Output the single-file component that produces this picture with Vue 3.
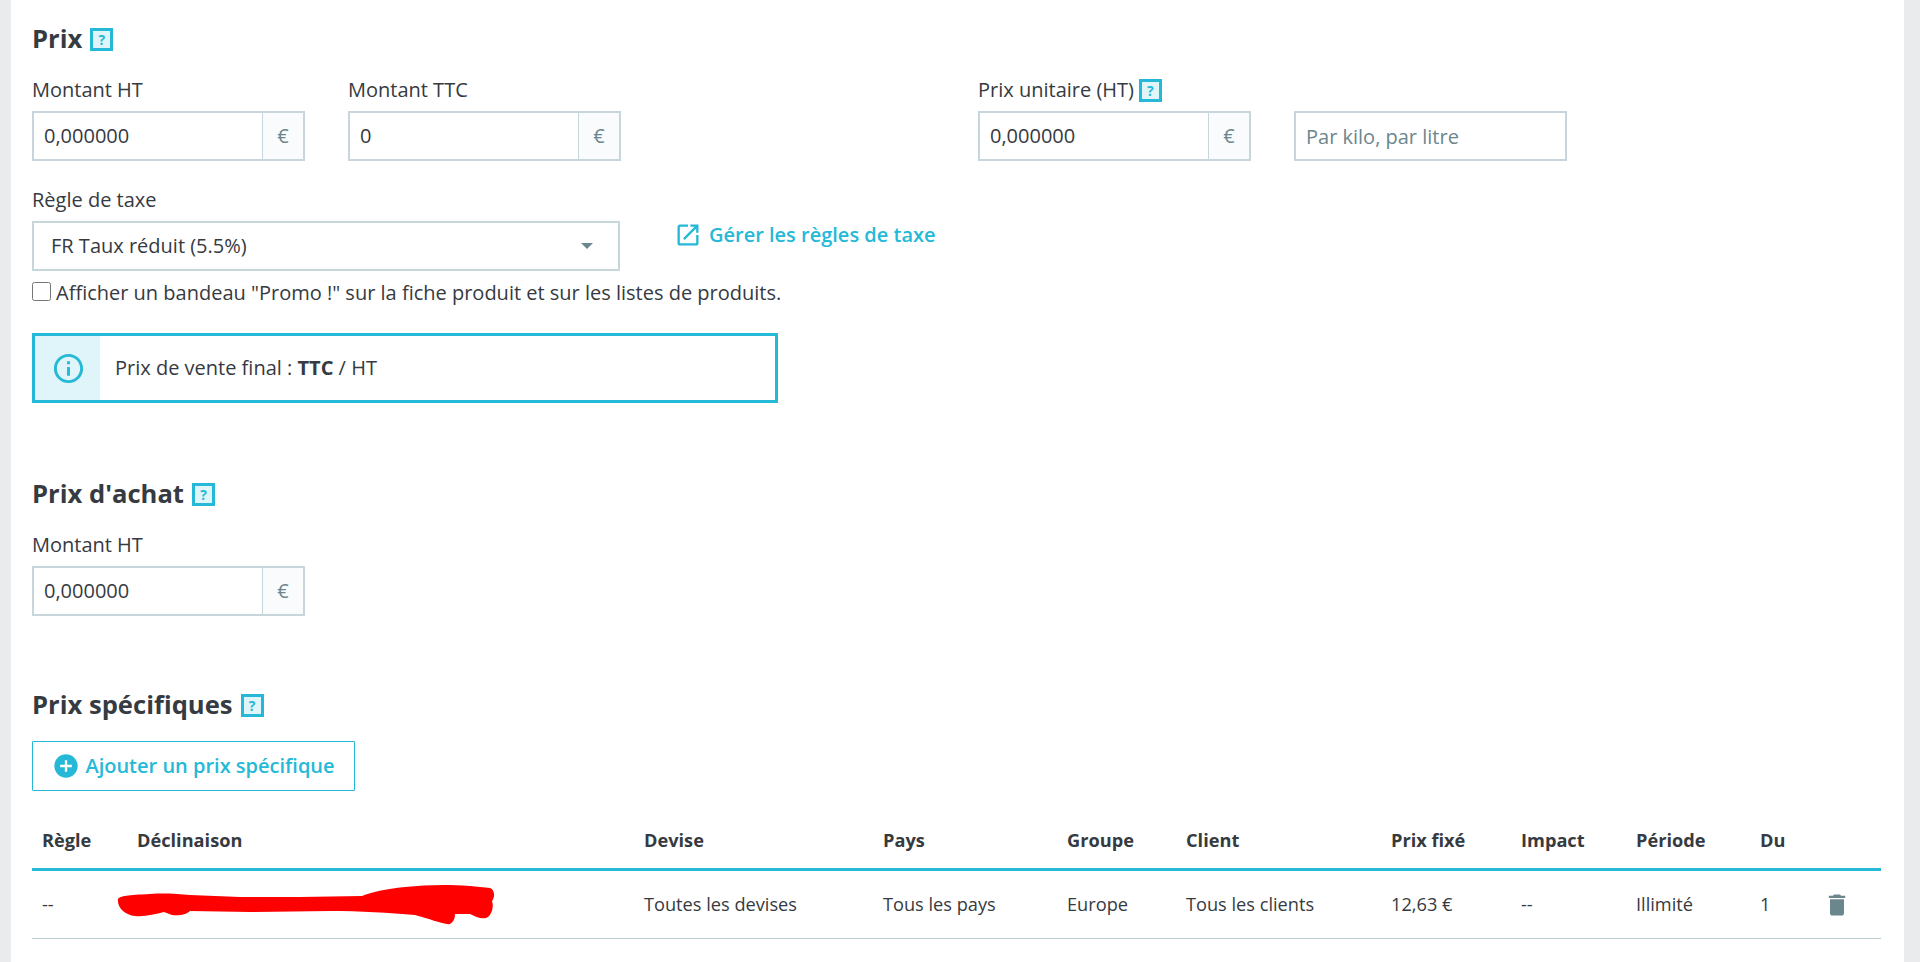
<template>
  <div class="page">
    <div class="card">
      <h2 class="heading first">Prix <span class="help">?</span></h2>

      <div class="price-row">
        <div class="field">
          <label>Montant HT</label>
          <div class="money"><input value="0,000000" readonly /><span class="addon">€</span></div>
        </div>
        <div class="field">
          <label>Montant TTC</label>
          <div class="money"><input value="0" readonly /><span class="addon">€</span></div>
        </div>
        <div class="field unit">
          <label>Prix unitaire (HT) <span class="help small">?</span></label>
          <div class="money"><input value="0,000000" readonly /><span class="addon">€</span></div>
        </div>
        <div class="field per">
          <input class="plain" placeholder="Par kilo, par litre" readonly />
        </div>
      </div>

      <div class="tax-row">
        <div class="field tax">
          <label>Règle de taxe</label>
          <div class="select-box">
            <span>FR Taux réduit (5.5%)</span>
            <i class="caret"></i>
          </div>
        </div>
        <a class="tax-link">
          <svg viewBox="0 0 24 24" width="28" height="28"><path d="M19 19H5V5h7V3H5c-1.11 0-2 .9-2 2v14c0 1.1.89 2 2 2h14c1.1 0 2-.9 2-2v-7h-2v7zM14 3v2h3.59l-9.83 9.83 1.41 1.41L19 6.41V10h2V3h-7z" /></svg>
          Gérer les règles de taxe
        </a>
      </div>

      <label class="promo"><input type="checkbox" /><span>Afficher un bandeau "Promo !" sur la fiche produit et sur les listes de produits.</span></label>

      <div class="info">
        <div class="info-icon">
          <svg viewBox="0 0 24 24" width="35" height="35"><path d="M11 17h2v-6h-2v6zm1-15C6.48 2 2 6.48 2 12s4.48 10 10 10 10-4.48 10-10S17.52 2 12 2zm0 18c-4.41 0-8-3.59-8-8s3.59-8 8-8 8 3.59 8 8-3.59 8-8 8zM11 9h2V7h-2v2z" /></svg>
        </div>
        <div class="info-text">Prix de vente final : <b>TTC</b> / HT</div>
      </div>

      <h2 class="heading achat">Prix d'achat <span class="help">?</span></h2>
      <div class="field achat-field">
        <label>Montant HT</label>
        <div class="money"><input value="0,000000" readonly /><span class="addon">€</span></div>
      </div>

      <h2 class="heading specific">Prix spécifiques <span class="help">?</span></h2>
      <button class="add-btn">
        <svg viewBox="0 0 24 24" width="28" height="28"><path d="M12 2C6.48 2 2 6.48 2 12s4.48 10 10 10 10-4.48 10-10S17.52 2 12 2zm5 11h-4v4h-2v-4H7v-2h4V7h2v4h4v2z" /></svg>
        Ajouter un prix spécifique
      </button>

      <div class="table">
        <div class="row head">
          <span v-for="col in columns" :key="col">{{ col }}</span>
        </div>
        <div class="row body">
          <span v-for="(cell, i) in cells" :key="i" :class="{ hidden: i === 1 }">
            {{ cell }}
            <svg v-if="i === 1" class="scribble" viewBox="116 883 380 44" width="380" height="44">
              <path d="M118 899C120 896 128 895 150 894C165 893 178 894 190 895L240 897L300 897L362 896C372 892 385 889 405 887C425 885 445 884 470 886L490 888C495 890 495 897 492 901C494 906 492 914 488 917C483 920 476 917 470 914L455 914C455 920 452 925 447 924C440 923 430 919 415 915C390 913 360 911 330 911L250 912L190 911C186 915 178 916 172 915L164 912C155 914 145 917 135 916C125 915 117 908 118 899Z" fill="#ff0000" />
            </svg>
          </span>
          <span class="trash">
            <svg viewBox="0 0 24 24" width="28" height="28"><path d="M6 19c0 1.1.9 2 2 2h8c1.1 0 2-.9 2-2V7H6v12zM19 4h-3.5l-1-1h-5l-1 1H5v2h14V4z" /></svg>
          </span>
        </div>
      </div>
    </div>
  </div>
</template>

<script setup>
const columns = ['Règle', 'Déclinaison', 'Devise', 'Pays', 'Groupe', 'Client', 'Prix fixé', 'Impact', 'Période', 'Du', '']
const cells = ['--', '', 'Toutes les devises', 'Tous les pays', 'Europe', 'Tous les clients', '12,63 €', '--', 'Illimité', '1']
</script>

<style>
html, body {
  margin: 0;
  height: 962px;
  overflow: hidden;
  background: #eaebec;
}
</style>

<style scoped>
.page {
  padding: 0 16px 0 11px;
  font-family: "Open Sans", "Noto Sans", sans-serif;
  font-size: 20px;
  line-height: 26px;
  color: #363a41;
}
.card {
  background: #fff;
  height: 962px;
  padding: 0 23px 0 21px;
  box-sizing: border-box;
  overflow: hidden;
}
.heading {
  margin: 0;
  font-size: 25.6px;
  line-height: 30px;
  font-weight: 700;
  display: flex;
  align-items: center;
  gap: 8px;
}
.heading.first { padding-top: 24px; }
.heading.achat { margin-top: 76px; }
.heading.specific { margin-top: 74px; }
.help {
  width: 23px;
  height: 23px;
  box-sizing: border-box;
  border: 3px solid #25b9d7;
  background: #dff5f9;
  color: #25b9d7;
  font-size: 14px;
  line-height: 17px;
  font-weight: 700;
  text-align: center;
  display: inline-block;
}
.price-row {
  display: flex;
  margin-top: 23px;
}
.field label {
  display: flex;
  align-items: center;
  gap: 5px;
  height: 26px;
  margin-bottom: 8px;
  white-space: nowrap;
}
.money {
  display: flex;
  width: 273px;
  height: 50px;
  box-sizing: border-box;
  border: 2px solid #c6d6da;
}
.money input, .plain {
  font: inherit;
  color: inherit;
  border: 0;
  outline: 0;
  min-width: 0;
  flex: 1;
  padding: 0 10px;
  background: #fff;
}
.addon {
  width: 41px;
  box-sizing: border-box;
  border-left: 1px solid #c6d6da;
  background: #fafbfc;
  color: #6c868e;
  display: flex;
  align-items: center;
  justify-content: center;
}
.field + .field { margin-left: 43px; }
.field.unit { margin-left: 357px; }
.field.per { padding-top: 34px; }
.plain {
  display: block;
  width: 273px;
  height: 50px;
  box-sizing: border-box;
  border: 2px solid #c6d6da;
}
.plain::placeholder { color: #6c868e; opacity: 1; }
.tax-row {
  display: flex;
  margin-top: 26px;
}
.select-box {
  width: 588px;
  height: 50px;
  box-sizing: border-box;
  border: 2px solid #c6d6da;
  padding: 0 17px;
  display: flex;
  align-items: center;
  justify-content: space-between;
}
.caret {
  width: 0;
  height: 0;
  border: 6px solid transparent;
  border-top: 6px solid #6c868e;
  border-bottom: 0;
  margin-right: 8px;
}
.tax-link {
  display: flex;
  align-items: center;
  gap: 7px;
  margin: 34px 0 0 57px;
  height: 50px;
  align-self: flex-start;
  position: relative;
  top: -11px;
  color: #25b9d7;
  font-weight: 600;
  fill: #25b9d7;
}
.tax-link svg { margin-left: -3px; }
.promo {
  display: flex;
  align-items: center;
  gap: 5px;
  margin-top: 9px;
  height: 26px;
}
.promo input {
  width: 19px;
  height: 19px;
  margin: 0;
  position: relative;
  top: -2px;
}
.info {
  margin-top: 27px;
  width: 746px;
  height: 70px;
  box-sizing: border-box;
  border: 3px solid #25b9d7;
  display: flex;
  align-items: center;
}
.info-icon {
  width: 65px;
  height: 100%;
  padding-left: 1px;
  box-sizing: border-box;
  background: #dff5f9;
  display: flex;
  align-items: center;
  justify-content: center;
  fill: #25b9d7;
}
.info-text { padding-left: 15px; }
.achat-field { margin-top: 23px; }
.add-btn {
  margin-top: 21px;
  width: 323px;
  height: 50px;
  box-sizing: border-box;
  background: #fff;
  border: 1px solid #25b9d7;
  border-radius: 1px;
  color: #25b9d7;
  fill: #25b9d7;
  font: inherit;
  font-weight: 600;
  display: flex;
  align-items: center;
  justify-content: center;
  gap: 5px;
  padding: 0;
}
.table { margin-top: 22px; }
.row {
  display: grid;
  grid-template-columns: 95px 507px 239px 184px 119px 205px 130px 115px 124px 68px 63px;
  align-items: center;
  font-size: 18.2px;
}
.row span { padding: 0 0 2px 10px; white-space: nowrap; }
.head {
  height: 55px;
  font-weight: 700;
  border-bottom: 3px solid #25b9d7;
}
.body {
  height: 67px;
  border-bottom: 1px solid #bbcdd2;
}
.hidden { position: relative; height: 26px; }
.scribble {
  position: absolute;
  left: -11px;
  top: -8px;
}
.trash { fill: #6c868e; display: flex; padding: 0 0 0 5px !important; }
</style>
